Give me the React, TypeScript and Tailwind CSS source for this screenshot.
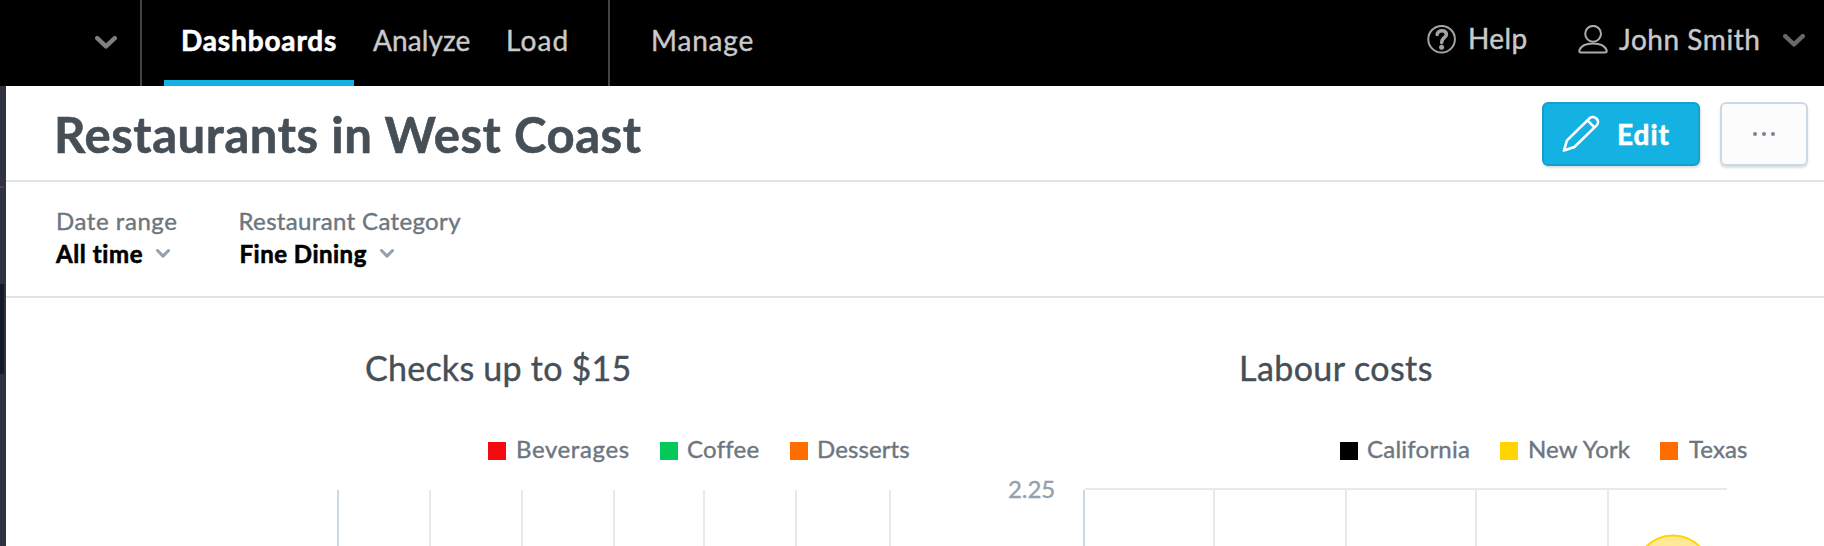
import React from "react";

const regular = "whitespace-pre [-webkit-text-stroke:0.4px]";
const bold = "whitespace-pre font-bold [-webkit-text-stroke:0.6px]";

function Chevron({ className, width, height, stroke }: { className: string; width: number; height: number; stroke: number }) {
  const p = stroke / 2;
  return (
    <svg className={className} width={width} height={height} viewBox={`0 0 ${width} ${height}`} fill="none" stroke="currentColor" strokeWidth={stroke} strokeLinecap="round" strokeLinejoin="round">
      <path d={`M${p} ${p} L${width / 2} ${height - p - 0.4} L${width - p} ${p}`} />
    </svg>
  );
}

function HelpIcon() {
  return (
    <svg className="mt-[25px] shrink-0" width="30" height="30" viewBox="0 0 30 30" fill="none" stroke="#a3a3a3">
      <circle cx="14.6" cy="14.2" r="13.3" strokeWidth="2" />
      <path d="M10.2 9.4 C10.6 4.4 19.2 4.6 19.4 9.2 C19.4 12.8 14.6 12.8 14.6 17.4" strokeWidth="3.6" strokeLinecap="round" />
      <circle cx="14.6" cy="22.2" r="2.5" fill="#a3a3a3" stroke="none" />
    </svg>
  );
}

function UserIcon() {
  return (
    <svg className="mt-[25px] -ml-[2px] mr-px shrink-0" width="30" height="30" viewBox="0 0 30 30" fill="none" stroke="#ababab" strokeWidth="2">
      <circle cx="15.1" cy="8.8" r="7.9" />
      <path d="M3 27.4 C1.4 27.4 1 26.6 1.4 25.2 C3 21 8.4 18.5 15 18.5 C21.6 18.5 27 21 28.6 25.2 C29 26.6 28.6 27.4 27 27.4 Z" />
    </svg>
  );
}

function PencilIcon() {
  return (
    <svg className="shrink-0" width="38" height="38" viewBox="0 0 38 38" fill="none" stroke="#fff" strokeWidth="2.6" strokeLinejoin="round">
      <path d="M1.9 35.6 L5 25.4 L27.6 3.2 C32.4 -0.6 39 6 34.6 10.4 L12.4 32 Z" />
      <path d="M25.6 5.4 L32.4 12.4" />
    </svg>
  );
}

function Legend({ items, className }: { items: { label: string; box: string; text: string }[]; className: string }) {
  return (
    <div className={`flex h-8 text-2xl leading-8 text-[#6d7680] ${className}`}>
      {items.map((i) => (
        <div key={i.label} className="flex">
          <span className={`mt-[9px] size-[18px] shrink-0 ${i.box}`} />
          <span className={`${regular} ${i.text}`}>{i.label}</span>
        </div>
      ))}
    </div>
  );
}

const checksLegend = [
  { label: "Beverages", box: "bg-[#f60a12]", text: "ml-[10px] w-[144px] tracking-[0.6px]" },
  { label: "Coffee", box: "bg-[#05c85a]", text: "ml-[9px] w-[103px] tracking-[0.25px]" },
  { label: "Desserts", box: "bg-[#ff6d00]", text: "ml-[9px] tracking-[0.1px]" },
];

const labourLegend = [
  { label: "California", box: "bg-black", text: "ml-[9px] w-[133px] tracking-[0.23px]" },
  { label: "New York", box: "bg-[#ffd400]", text: "ml-[10px] w-[132px] tracking-[0.15px]" },
  { label: "Texas", box: "bg-[#ff6d00]", text: "ml-[11px] tracking-[0.1px]" },
];

export default function App() {
  return (
    <div className="h-[546px] w-[1824px] overflow-hidden bg-white font-['Lato',sans-serif]">
      <header className="flex h-[86px] bg-black text-[28px] leading-9 text-[#cacaca]">
        <div className="w-[142px] shrink-0 border-r-2 border-[#444] pt-9 pl-[95px] text-[#808080]">
          <Chevron className="" width={22} height={13} stroke={4.4} />
        </div>
        <nav className="flex w-[468px] shrink-0 border-r-2 border-[#444]">
          <a className={`${bold} ml-[22px] w-[190px] border-b-[6px] border-[#14b2e2] pt-[22px] pl-[17px] tracking-[0.85px] text-white`}>Dashboards</a>
          <a className={`${regular} ml-[19px] w-[133px] pt-[22px] tracking-[0.1px]`}>Analyze</a>
          <a className={`${regular} pt-[22px] tracking-[1.1px]`}>Load</a>
        </nav>
        <a className={`${regular} ml-[41px] pt-[22px] tracking-[0.83px]`}>Manage</a>
        <div className="ml-auto flex w-[397px] shrink-0">
          <HelpIcon />
          <span className={`${regular} ml-[11px] w-[112px] pt-[20px] tracking-[0.4px]`}>Help</span>
          <UserIcon />
          <span className={`${regular} ml-[10px] w-[164px] pt-[21px] tracking-[0.55px]`}>John Smith</span>
          <Chevron className="mt-[34px] shrink-0 text-[#686868]" width={22} height={13} stroke={4.4} />
        </div>
      </header>

      <div className="flex h-[460px]">
        <aside className="w-[6px] shrink-0 bg-[#303242] pt-[100px]">
          <div className="h-[2px] w-1 bg-[#454756]" />
          <div className="mt-24 h-[90px] w-1 bg-[#121b27]" />
        </aside>

        <main className="min-w-0 flex-1">
          <div className="flex h-24 items-center border-b-2 border-[#dde4ec] pt-[2px] pr-4 pl-12">
            <h1 className={`${bold} text-[49px] leading-[60px] tracking-[0.59px] text-[#464e56]`}>Restaurants in West Coast</h1>
            <button className="ml-auto flex h-16 w-[158px] items-center rounded-md border-2 border-[#14a0cb] bg-[#14b2e2] pl-[18px] text-[28px] tracking-[1px] text-white shadow-[1px_2px_2px_#14384b26]">
              <PencilIcon />
              <span className={`${bold} ml-[17px]`}>Edit</span>
            </button>
            <button className="ml-5 flex h-16 w-[88px] items-center justify-center gap-[5px] rounded-md border-2 border-[#ccd8e2] bg-[#fcfcfd] shadow-[0_2px_2px_#14384b26]">
              <span className="size-1 rounded-full bg-[#778491]" />
              <span className="size-1 rounded-full bg-[#778491]" />
              <span className="size-1 rounded-full bg-[#778491]" />
            </button>
          </div>

          <div className="flex h-[116px] border-b-2 border-[#dde4ec] pt-[23px] pl-[49px] text-2xl leading-8">
            <div className="w-[183.5px]">
              <div className={`${regular} pl-px tracking-[0.55px] text-[#6d7680]`}>Date range</div>
              <div className="flex text-black">
                <span className={`${bold} w-[101px] pt-px pl-px tracking-[0.6px]`}>All time</span>
                <Chevron className="mt-3 text-[#94a1ad]" width={14} height={9} stroke={3} />
              </div>
            </div>
            <div>
              <div className={`${regular} tracking-[0.35px] text-[#6d7680]`}>Restaurant Category</div>
              <div className="flex text-black">
                <span className={`${bold} w-[141.5px] pt-px pl-px tracking-[0.5px]`}>Fine Dining</span>
                <Chevron className="mt-3 text-[#94a1ad]" width={14} height={9} stroke={3} />
              </div>
            </div>
          </div>

          <div className="flex">
            <section className="w-[974px] shrink-0 pt-[50px]">
              <h2 className={`${regular} pl-[359px] text-[34px] leading-10 tracking-[0.25px] text-[#464e56]`}>Checks up to $15</h2>
              <Legend className="mt-[45px] pl-[482px]" items={checksLegend} />
              <svg className="mt-[25px] ml-[331px]" width="560" height="56" viewBox="0 0 560 56" shapeRendering="crispEdges">
                <rect x="0" width="2" height="56" fill="#cbd5eb" />
                {[92, 184, 276, 366, 458, 552].map((x) => (
                  <rect key={x} x={x} width="2" height="56" fill="#e9e9e9" />
                ))}
              </svg>
            </section>
            <section className="min-w-0 flex-1 pt-[50px]">
              <h2 className={`${regular} pl-[259px] text-[34px] leading-10 tracking-[0.42px] text-[#464e56]`}>Labour costs</h2>
              <Legend className="mt-[45px] pl-[360px]" items={labourLegend} />
              <div className="mt-2 flex">
                <span className={`${regular} ml-7 w-[75px] text-2xl leading-8 tracking-[-0.1px] text-[#94a1ad]`}>2.25</span>
                <svg className="mt-[15px]" width="644" height="58" viewBox="0 0 644 58">
                  <rect x="2" y="0" width="642" height="2" fill="#e9e9e9" />
                  <rect x="0" y="2" width="2" height="56" fill="#cbd5eb" />
                  {[130, 262, 392, 524].map((x) => (
                    <rect key={x} x={x} y="2" width="2" height="56" fill="#e9e9e9" />
                  ))}
                  <circle cx="590" cy="85.5" r="38" fill="#ffe996" stroke="#ffd400" strokeWidth="2" />
                </svg>
              </div>
            </section>
          </div>
        </main>
      </div>
    </div>
  );
}
